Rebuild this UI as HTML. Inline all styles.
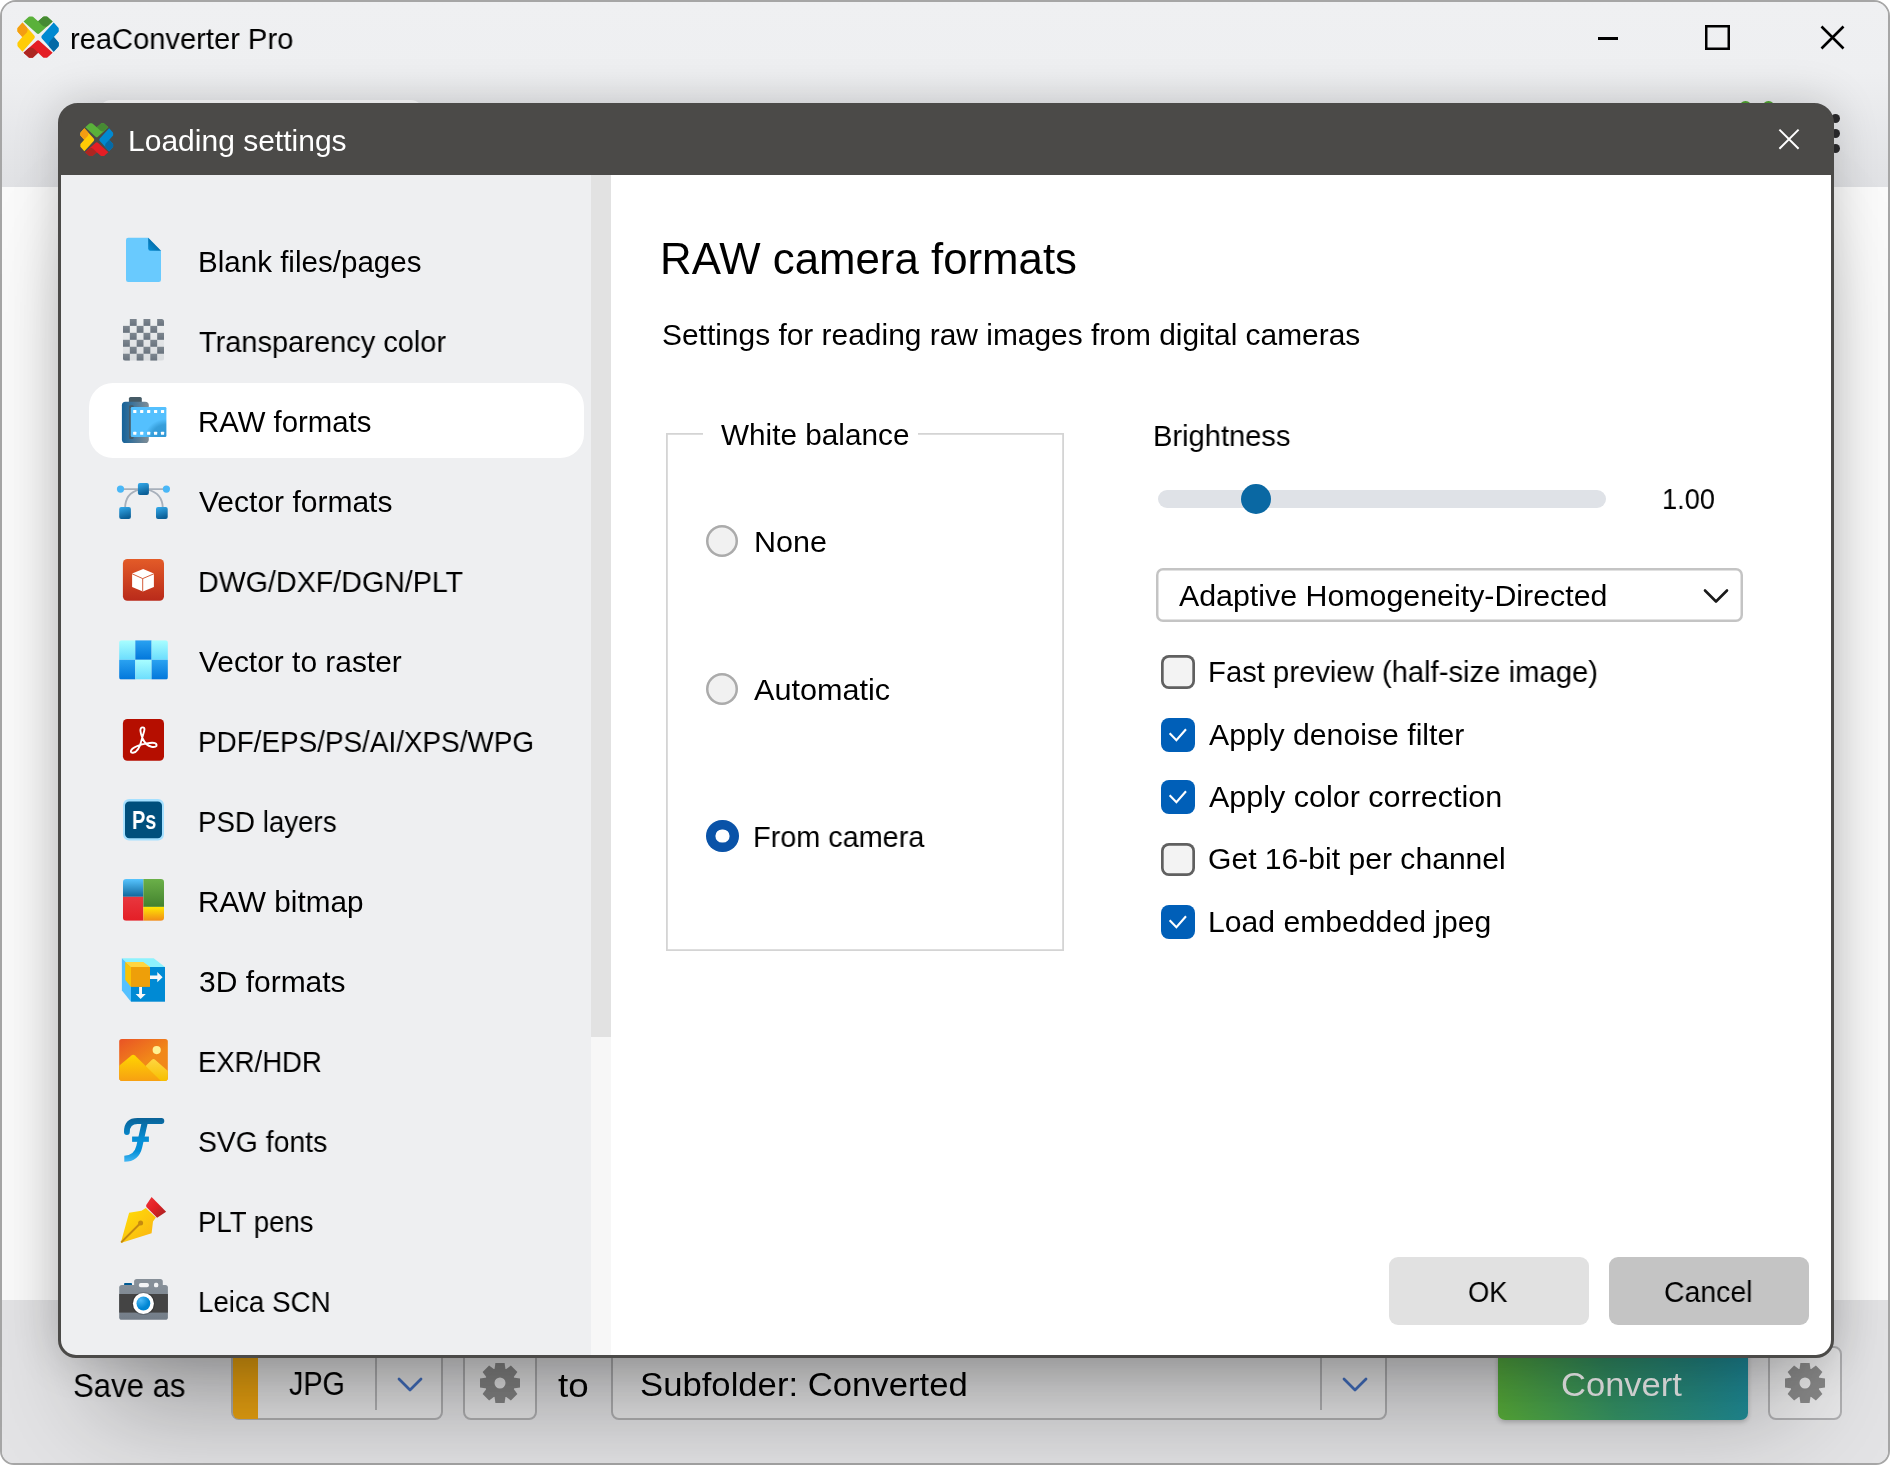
<!DOCTYPE html>
<html><head><meta charset="utf-8"><title>reaConverter Pro</title>
<style>
html,body{margin:0;padding:0;background:#fff;}
body{width:1890px;height:1465px;position:relative;overflow:hidden;font-family:"Liberation Sans",sans-serif;}
.a{position:absolute;}
.t{will-change:transform;position:absolute;white-space:nowrap;line-height:1;transform-origin:0 0;font-family:"Liberation Sans",sans-serif;}
#win{position:absolute;left:0;top:0;width:1886px;height:1461px;border:2px solid #a6a6a6;border-radius:16px 16px 14px 14px;overflow:hidden;background:#f6f6f6;}
#top{position:absolute;left:0;top:0;width:1886px;height:185px;background:linear-gradient(#eff0f2 0,#eeeff1 70px,#e0e1e4 185px);}
#mid{position:absolute;left:0;top:185px;width:1886px;height:1113px;background:#fafafa;}
#bot{position:absolute;left:0;top:1298px;width:1886px;height:165px;background:#e3e3e5;}
#dlg{position:absolute;left:58px;top:103px;width:1770px;height:1249px;border:3px solid #4b4a48;border-radius:20px 20px 18px 18px;background:#4b4a48;box-shadow:0 0 46px rgba(0,0,0,.19),0 90px 100px -40px rgba(0,0,0,.30);overflow:hidden;}
#dtitle{position:absolute;left:0;top:0;width:1770px;height:69px;background:#4b4a48;}
#side{position:absolute;left:0;top:69px;width:530px;height:1180px;background:#eeeff1;}
#sbar{position:absolute;left:530px;top:69px;width:20px;height:1180px;background:#f7f7f7;}
#sthumb{position:absolute;left:0;top:0;width:20px;height:862px;background:#e2e2e2;}
#main{position:absolute;left:550px;top:69px;width:1220px;height:1180px;background:#fff;}
#sel{position:absolute;left:28px;top:208px;width:495px;height:75px;border-radius:24px;background:#fff;}
.btn{position:absolute;top:1257.3px;width:200px;height:67.4px;border-radius:9px;}
.rad{position:absolute;width:32.2px;height:32.2px;box-shadow:inset 0 0 0 2.5px #ababab;border-radius:50%;background:#f1f1f1;}
.cb{position:absolute;left:1161px;width:30px;height:30px;border-radius:8px;}
.cb.off{box-shadow:inset 0 0 0 2.7px #606060;background:#f3f3f3;width:33.8px;height:33.6px;}
.cb.on{background:#005fb8;width:34px;height:34px;}
.combo{position:absolute;top:1344px;height:70px;border:2px solid #b0b0b2;border-radius:8px;background:#e9e9ea;}

</style></head><body>
<div id="win">
 <div id="top"></div><div id="mid"></div><div id="bot"></div>
 <!--WINICONS-->
<!--TABPEEK--><div class="a" style="left:97px;top:97.5px;width:324px;height:30px;border-radius:12px 12px 0 0;background:#fcfcfd;"></div>
<!-- window controls -->
<div class="a" style="left:1596px;top:35px;width:19.5px;height:2.5px;background:#000;"></div>
<div class="a" style="left:1702.6px;top:23px;width:25.4px;height:24.6px;box-shadow:inset 0 0 0 2.5px #000;"></div>
<svg class="a" style="left:1815px;top:20.3px" width="32" height="32" viewBox="0 0 32 32"><path d="M4.5 4.5 L26.5 26.5 M26.5 4.5 L4.5 26.5" stroke="#000" stroke-width="2.6"/></svg>
<!-- green dots and 3-dot menu -->
<div class="a" style="left:1737px;top:99px;width:13px;height:13px;border-radius:50%;background:#4fa530;"></div>
<div class="a" style="left:1760px;top:99px;width:13px;height:13px;border-radius:50%;background:#4fa530;"></div>
<div class="a" style="left:1829px;top:112px;width:9px;height:9px;border-radius:50%;background:#2b2b2d;"></div>
<div class="a" style="left:1829px;top:126.5px;width:9px;height:9px;border-radius:50%;background:#2b2b2d;"></div>
<div class="a" style="left:1829px;top:141.5px;width:9px;height:9px;border-radius:50%;background:#2b2b2d;"></div>

<!--LOGO-->
<svg class="a" style="left:14.8px;top:14.2px" width="42.2" height="42.2" viewBox="0 0 100 100"><g transform="rotate(0 50 50)"><path d="M15.5 13 L28 1.8 Q29 1 30.5 1 H35.5 Q37 1 38 1.9 L50 12.6 L62 1.9 Q63 1 64.5 1 H69.5 Q71 1 72 1.8 L84.5 13 L53.5 41 Q50 44 46.5 41Z" fill="#5ab13a"/><path d="M50 12.6 L62 1.9 Q63 1 64.5 1 H69.5 Q71 1 72 1.8 L84.5 13 L73 23.5 C68 27 62 25 58 20.5Z" fill="#468a33"/></g><g transform="rotate(90 50 50)"><path d="M15.5 13 L28 1.8 Q29 1 30.5 1 H35.5 Q37 1 38 1.9 L50 12.6 L62 1.9 Q63 1 64.5 1 H69.5 Q71 1 72 1.8 L84.5 13 L53.5 41 Q50 44 46.5 41Z" fill="#0089d1"/><path d="M50 12.6 L62 1.9 Q63 1 64.5 1 H69.5 Q71 1 72 1.8 L84.5 13 L73 23.5 C68 27 62 25 58 20.5Z" fill="#056aa6"/></g><g transform="rotate(180 50 50)"><path d="M15.5 13 L28 1.8 Q29 1 30.5 1 H35.5 Q37 1 38 1.9 L50 12.6 L62 1.9 Q63 1 64.5 1 H69.5 Q71 1 72 1.8 L84.5 13 L53.5 41 Q50 44 46.5 41Z" fill="#e41e25"/><path d="M50 12.6 L62 1.9 Q63 1 64.5 1 H69.5 Q71 1 72 1.8 L84.5 13 L73 23.5 C68 27 62 25 58 20.5Z" fill="#ad2621"/></g><g transform="rotate(270 50 50)"><path d="M15.5 13 L28 1.8 Q29 1 30.5 1 H35.5 Q37 1 38 1.9 L50 12.6 L62 1.9 Q63 1 64.5 1 H69.5 Q71 1 72 1.8 L84.5 13 L53.5 41 Q50 44 46.5 41Z" fill="#ffcc05"/><path d="M50 12.6 L62 1.9 Q63 1 64.5 1 H69.5 Q71 1 72 1.8 L84.5 13 L73 23.5 C68 27 62 25 58 20.5Z" fill="#f49d12"/></g></svg>

 <!-- bottom bar controls (coords relative to #win inner = page -2) -->
<div class="combo" style="left:229px;width:208px;"></div>
<div class="a" style="left:231px;top:1347px;width:25px;height:70px;border-radius:6px 0 0 6px;background:#eda511;"></div>
<div class="a" style="left:373px;top:1352px;width:2px;height:56px;background:#b4b4b6;"></div>
<svg class="a" style="left:392px;top:1371px" width="32" height="24" viewBox="0 0 32 24"><path d="M5 6 L16 17 L27 6" fill="none" stroke="#4472c4" stroke-width="2.8" stroke-linecap="round" stroke-linejoin="round"/></svg>
<div class="combo" style="left:461px;width:70px;"></div>
<div class="combo" style="left:609px;width:772px;"></div>
<div class="a" style="left:1318px;top:1352px;width:2px;height:56px;background:#b4b4b6;"></div>
<svg class="a" style="left:1337px;top:1371px" width="32" height="24" viewBox="0 0 32 24"><path d="M5 6 L16 17 L27 6" fill="none" stroke="#4472c4" stroke-width="2.8" stroke-linecap="round" stroke-linejoin="round"/></svg>
<div class="a" style="left:1495.5px;top:1345px;width:250px;height:73px;border-radius:7px;background:linear-gradient(75deg,#5cb43a 0%,#36986a 45%,#1d8da0 100%);box-shadow:0 2px 5px rgba(0,0,0,.22);"></div>
<div class="combo" style="left:1766px;width:70px;"></div>
<!--GEARS-->
<svg class="a" style="left:474px;top:1356.5px" width="48" height="48" viewBox="-24 -24 48 48"><g fill="#888888"><path fill-rule="evenodd" d="M0 -15 A15 15 0 1 1 0 15 A15 15 0 1 1 0 -15Z M0 -5.5 A5.5 5.5 0 1 0 0 5.5 A5.5 5.5 0 1 0 0 -5.5Z"/><path transform="rotate(0)" d="M-4.6 -20 H4.6 L5.6 -13 H-5.6Z"/><path transform="rotate(45)" d="M-4.6 -20 H4.6 L5.6 -13 H-5.6Z"/><path transform="rotate(90)" d="M-4.6 -20 H4.6 L5.6 -13 H-5.6Z"/><path transform="rotate(135)" d="M-4.6 -20 H4.6 L5.6 -13 H-5.6Z"/><path transform="rotate(180)" d="M-4.6 -20 H4.6 L5.6 -13 H-5.6Z"/><path transform="rotate(225)" d="M-4.6 -20 H4.6 L5.6 -13 H-5.6Z"/><path transform="rotate(270)" d="M-4.6 -20 H4.6 L5.6 -13 H-5.6Z"/><path transform="rotate(315)" d="M-4.6 -20 H4.6 L5.6 -13 H-5.6Z"/></g></svg>
<svg class="a" style="left:1778.8px;top:1357px" width="48" height="48" viewBox="-24 -24 48 48"><g fill="#8a8a8a"><path fill-rule="evenodd" d="M0 -15 A15 15 0 1 1 0 15 A15 15 0 1 1 0 -15Z M0 -5.5 A5.5 5.5 0 1 0 0 5.5 A5.5 5.5 0 1 0 0 -5.5Z"/><path transform="rotate(0)" d="M-4.6 -20 H4.6 L5.6 -13 H-5.6Z"/><path transform="rotate(45)" d="M-4.6 -20 H4.6 L5.6 -13 H-5.6Z"/><path transform="rotate(90)" d="M-4.6 -20 H4.6 L5.6 -13 H-5.6Z"/><path transform="rotate(135)" d="M-4.6 -20 H4.6 L5.6 -13 H-5.6Z"/><path transform="rotate(180)" d="M-4.6 -20 H4.6 L5.6 -13 H-5.6Z"/><path transform="rotate(225)" d="M-4.6 -20 H4.6 L5.6 -13 H-5.6Z"/><path transform="rotate(270)" d="M-4.6 -20 H4.6 L5.6 -13 H-5.6Z"/><path transform="rotate(315)" d="M-4.6 -20 H4.6 L5.6 -13 H-5.6Z"/></g></svg>

</div>
<div id="dlg">
 <div id="dtitle"></div>
 <div id="side"><div id="sel"></div></div>
 <div id="sbar"><div id="sthumb"></div></div>
 <div id="main"></div>
</div>
<svg class="a" style="left:0;top:0;pointer-events:none" width="1890" height="1465" viewBox="0 0 1890 1465">
<defs>
 <linearGradient id="gFold" x1="0" y1="1" x2="1" y2="0"><stop offset="0" stop-color="#0690d8"/><stop offset="1" stop-color="#065283"/></linearGradient>
 <linearGradient id="gChkD" x1="0" y1="0" x2="0" y2="1"><stop offset="0" stop-color="#7d868f"/><stop offset="1" stop-color="#69737e"/></linearGradient>
 <linearGradient id="gChkL" x1="0" y1="0" x2="0" y2="1"><stop offset="0" stop-color="#eef0f1"/><stop offset="1" stop-color="#d9dcdf"/></linearGradient>
 <linearGradient id="gCan" x1="0" y1="0" x2="1" y2="0"><stop offset="0" stop-color="#14629a"/><stop offset="1" stop-color="#808d96"/></linearGradient>
 <radialGradient id="gFilm" cx="1" cy="1" r="0.75"><stop offset="0" stop-color="#2f97d6"/><stop offset="0.55" stop-color="#379fdb"/><stop offset="0.8" stop-color="#54c0fe"/><stop offset="1" stop-color="#54c0fe"/></radialGradient>
 <linearGradient id="gSq" x1="0" y1="0" x2="0.3" y2="1"><stop offset="0" stop-color="#35abec"/><stop offset="1" stop-color="#0b5f97"/></linearGradient>
 <linearGradient id="gDwg" x1="0" y1="0" x2="0" y2="1"><stop offset="0" stop-color="#e35b28"/><stop offset="1" stop-color="#b92a1a"/></linearGradient>
 <linearGradient id="gVrL" x1="0" y1="0" x2="0" y2="1"><stop offset="0" stop-color="#a8feff"/><stop offset="1" stop-color="#6cddfd"/></linearGradient>
 <linearGradient id="gVrD" x1="0" y1="0" x2="0" y2="1"><stop offset="0" stop-color="#2aa2f1"/><stop offset="1" stop-color="#0277db"/></linearGradient>
 <linearGradient id="gRbB" x1="0" y1="0" x2="0" y2="1"><stop offset="0" stop-color="#57c5ff"/><stop offset="1" stop-color="#10679c"/></linearGradient>
 <linearGradient id="gRbR" x1="0" y1="0" x2="0" y2="1"><stop offset="0" stop-color="#e8373e"/><stop offset="1" stop-color="#e41e26"/></linearGradient>
 <linearGradient id="gRbG" x1="0" y1="0" x2="0" y2="1"><stop offset="0" stop-color="#6bb049"/><stop offset="1" stop-color="#43822e"/></linearGradient>
 <linearGradient id="gRbY" x1="0" y1="0" x2="0" y2="1"><stop offset="0" stop-color="#ffe802"/><stop offset="1" stop-color="#f28a18"/></linearGradient>
 <linearGradient id="gHdr" x1="0" y1="0" x2="0.45" y2="0.6"><stop offset="0" stop-color="#e95325"/><stop offset="1" stop-color="#f18819"/></linearGradient>
 <linearGradient id="gMt1" x1="0" y1="0" x2="0" y2="1"><stop offset="0" stop-color="#ffd500"/><stop offset="1" stop-color="#f7a012"/></linearGradient>
 <linearGradient id="gMt2" x1="0" y1="0" x2="0" y2="1"><stop offset="0" stop-color="#ffd640"/><stop offset="1" stop-color="#f6bf00"/></linearGradient>
 <linearGradient id="gF" gradientUnits="userSpaceOnUse" x1="0" y1="1118" x2="0" y2="1162"><stop offset="0" stop-color="#0a6297"/><stop offset="0.5" stop-color="#058fd7"/><stop offset="0.75" stop-color="#058fd7"/><stop offset="1" stop-color="#45b8f5"/></linearGradient>
 <linearGradient id="gNib" x1="0" y1="0" x2="1" y2="1"><stop offset="0" stop-color="#ffe106"/><stop offset="1" stop-color="#fab015"/></linearGradient>
 <linearGradient id="gPenR" x1="0" y1="0" x2="1" y2="1"><stop offset="0" stop-color="#ec363b"/><stop offset="0.45" stop-color="#e41f25"/><stop offset="1" stop-color="#9e2322"/></linearGradient>
 <radialGradient id="gLens" cx="0.3" cy="0.25" r="0.6"><stop offset="0" stop-color="#4bb9f7"/><stop offset="1" stop-color="#0086d3"/></radialGradient>
 <linearGradient id="gCam" x1="0" y1="0" x2="0" y2="1"><stop offset="0" stop-color="#868f98"/><stop offset="1" stop-color="#737d88"/></linearGradient>
</defs>
<!-- 1 blank file -->
<path d="M128.2 237.8 H148.2 L161 250.8 V279.8 Q161 282 158.8 282 H128.2 Q126 282 126 279.8 V240 Q126 237.8 128.2 237.8Z" fill="#69cafe"/>
<path d="M148.2 237.8 L161 250.8 H150.4 Q148.2 250.8 148.2 248.6Z" fill="url(#gFold)"/>
<!-- 2 checker -->
<g>
<clipPath id="cpChk"><rect x="123" y="318.9" width="41" height="41.8" rx="2.5"/></clipPath>
<g clip-path="url(#cpChk)">
<rect x="123" y="318.9" width="41" height="41.8" fill="url(#gChkL)"/>
<g fill="url(#gChkD)">
<rect x="129.83" y="318.90" width="6.83" height="6.97"/>
<rect x="143.50" y="318.90" width="6.83" height="6.97"/>
<rect x="157.17" y="318.90" width="6.83" height="6.97"/>
<rect x="123.00" y="325.87" width="6.83" height="6.97"/>
<rect x="136.67" y="325.87" width="6.83" height="6.97"/>
<rect x="150.33" y="325.87" width="6.83" height="6.97"/>
<rect x="129.83" y="332.83" width="6.83" height="6.97"/>
<rect x="143.50" y="332.83" width="6.83" height="6.97"/>
<rect x="157.17" y="332.83" width="6.83" height="6.97"/>
<rect x="123.00" y="339.80" width="6.83" height="6.97"/>
<rect x="136.67" y="339.80" width="6.83" height="6.97"/>
<rect x="150.33" y="339.80" width="6.83" height="6.97"/>
<rect x="129.83" y="346.77" width="6.83" height="6.97"/>
<rect x="143.50" y="346.77" width="6.83" height="6.97"/>
<rect x="157.17" y="346.77" width="6.83" height="6.97"/>
<rect x="123.00" y="353.73" width="6.83" height="6.97"/>
<rect x="136.67" y="353.73" width="6.83" height="6.97"/>
<rect x="150.33" y="353.73" width="6.83" height="6.97"/>
</g></g></g>
<!-- 3 film -->
<rect x="128.9" y="397" width="12.9" height="8" rx="1.6" fill="#465b66"/>
<rect x="121.9" y="401.8" width="26.9" height="41.2" rx="3.6" fill="url(#gCan)"/>
<rect x="129.1" y="405.3" width="4.5" height="33.7" rx="1.3" fill="#465a66"/>
<rect x="130.8" y="407" width="35.6" height="29.9" rx="1.2" fill="url(#gFilm)"/>
<g fill="#fff">
<rect x="133.20" y="410.1" width="3.2" height="2.8" rx="0.5"/>
<rect x="133.20" y="431.8" width="3.2" height="2.9" rx="0.5"/>
<rect x="140.13" y="410.1" width="3.2" height="2.8" rx="0.5"/>
<rect x="140.13" y="431.8" width="3.2" height="2.9" rx="0.5"/>
<rect x="147.06" y="410.1" width="3.2" height="2.8" rx="0.5"/>
<rect x="147.06" y="431.8" width="3.2" height="2.9" rx="0.5"/>
<rect x="153.99" y="410.1" width="3.2" height="2.8" rx="0.5"/>
<rect x="153.99" y="431.8" width="3.2" height="2.9" rx="0.5"/>
<rect x="160.92" y="410.1" width="3.2" height="2.8" rx="0.5"/>
<rect x="160.92" y="431.8" width="3.2" height="2.9" rx="0.5"/>
</g>
<!-- 4 vector -->
<path d="M120.5 489.1 H166.4" stroke="#a7b0bb" stroke-width="1.9" fill="none"/>
<path d="M139 489.6 C130 492 125.2 499 125.1 508" stroke="#a7b0bb" stroke-width="1.9" fill="none"/>
<path d="M147.8 489.6 C157.5 492 162.6 499 162.8 508" stroke="#a7b0bb" stroke-width="1.9" fill="none"/>
<circle cx="120.5" cy="489.1" r="3.6" fill="#49b7f7"/><circle cx="166.4" cy="489.1" r="3.6" fill="#49b7f7"/>
<rect x="137.9" y="483" width="11" height="12" rx="2" fill="url(#gSq)"/>
<rect x="119.2" y="507.1" width="11.7" height="11.9" rx="2" fill="url(#gSq)"/>
<rect x="156" y="507.1" width="11.7" height="11.9" rx="2" fill="url(#gSq)"/>
<!-- 5 dwg -->
<rect x="122.9" y="559" width="41.1" height="41.7" rx="4.5" fill="url(#gDwg)"/>
<path d="M143.2 568.9 L153.9 573.6 V587.1 L142.9 591.4 L132.1 587.1 V573.6Z" fill="#fff"/>
<path d="M132.1 573.8 L142.7 578.6 L153.9 573.8 M142.7 578.6 V591.4" stroke="#d04a24" stroke-width="0.9" fill="none"/>
<!-- 6 vector to raster -->
<clipPath id="cpVr"><rect x="119.1" y="640.2" width="48.8" height="39.4" rx="2.6"/></clipPath>
<g clip-path="url(#cpVr)">
<rect x="119.1" y="640.2" width="16.2" height="19.6" fill="url(#gVrL)"/><rect x="135.3" y="640.2" width="16.3" height="19.6" fill="url(#gVrD)"/><rect x="151.6" y="640.2" width="16.3" height="19.6" fill="url(#gVrL)"/>
<rect x="119.1" y="659.8" width="16.2" height="19.8" fill="url(#gVrD)"/><rect x="135.3" y="659.8" width="16.3" height="19.8" fill="url(#gVrL)"/><rect x="151.6" y="659.8" width="16.3" height="19.8" fill="url(#gVrD)"/>
</g>
<!-- 7 pdf -->
<rect x="122.9" y="719" width="41.1" height="41.7" rx="4.5" fill="#b50e00"/>
<g fill="none" stroke="#fff" stroke-width="1.9" stroke-linecap="round" stroke-linejoin="round">
<path d="M133 752.7 C137.8 752.6 140.2 746 141.9 739 C143.6 732 146.2 727.6 142.8 727.4 C139.2 727.2 140.2 733 142.6 738.5 C144.6 743 148 746 151.5 746.8 C155 747.5 156.9 746.4 156.6 744.9 C156.1 742.7 152 742.4 147 743.4 C142 744.3 135.6 745.8 132.4 748.8 C129.9 751.2 130.6 752.9 133 752.7Z"/>
</g>
<!-- 8 ps -->
<rect x="123.1" y="799.1" width="40.9" height="41.4" rx="6" fill="#a5e0ff"/>
<rect x="125" y="801.5" width="37" height="36.8" rx="4.2" fill="#004f7c"/>
<!-- 9 raw bitmap -->
<clipPath id="cpRb"><rect x="123" y="878.9" width="41" height="41.8" rx="3.2"/></clipPath>
<g clip-path="url(#cpRb)">
<rect x="123" y="878.9" width="20.4" height="17.9" fill="url(#gRbB)"/>
<rect x="123" y="896.8" width="20.4" height="24" fill="url(#gRbR)"/>
<rect x="143.4" y="878.9" width="20.6" height="28" fill="url(#gRbG)"/>
<rect x="143.4" y="906.9" width="20.6" height="14" fill="url(#gRbY)"/>
</g>
<!-- 10 3d -->
<path d="M121.9 958.2 H153.7 L165 967 H131Z" fill="#8ef2fd"/>
<path d="M121.9 958.2 L131 967 V1001.7 L121.9 990.4Z" fill="#55c1ff"/>
<rect x="131" y="967" width="34" height="34.7" fill="#008ad4"/>
<path d="M125.2 962 H143.4 L150 967 H131Z" fill="#ffd540"/>
<path d="M125.2 962 L131 967 V986.9 L125.2 979.7Z" fill="#f9c305"/>
<rect x="131" y="967" width="19" height="19.9" fill="#ee9f09"/>
<path d="M150 975.6 H157.3 V972 L162.6 977.2 L157.3 982.3 V979 H150Z" fill="#f8f8f8"/>
<path d="M139.1 986.9 H142 V994 H145.8 L140.6 999 L135.6 994 H139.1Z" fill="#f8f8f8"/>
<!-- 11 exr/hdr -->
<clipPath id="cpHdr"><rect x="119.1" y="1038.9" width="48.8" height="42" rx="2.8"/></clipPath>
<g clip-path="url(#cpHdr)">
<rect x="119.1" y="1038.9" width="48.8" height="42" fill="url(#gHdr)"/>
<path d="M145.8 1065.7 L151.9 1059.8 Q153.5 1058.3 155.1 1059.8 L167.9 1070.9 V1081 H150Z" fill="url(#gMt2)"/>
<path d="M119.1 1065.7 L131.4 1055.4 Q133.2 1053.9 135 1055.5 L161 1081 H119.1Z" fill="url(#gMt1)"/>
<circle cx="156.7" cy="1050.1" r="4.1" fill="#fff192"/>
</g>
<!-- 12 F -->
<g fill="none" stroke="url(#gF)" stroke-linejoin="round">
<path d="M161.4 1121 H137.5 C130 1121 126.9 1125 126.9 1132" stroke-width="5.8" stroke-linecap="round"/>
<path d="M145 1121.5 L139.3 1146.5 C137.5 1154.5 132.5 1158.7 124.3 1158.7" stroke-width="6" />
<path d="M132.1 1139.2 H148.9" stroke-width="5.3"/>
</g>
<!-- 13 pen -->
<path d="M120.75 1242.9 L129.1 1212.8 L141.5 1210.8 L145.8 1208 L155.9 1217.5 L153 1221.4 L151.6 1233.3Z" fill="url(#gNib)"/>
<path d="M151.6 1197 L166.1 1211.8 L157.1 1217.8 L146.4 1207 Q145.8 1205.8 146.4 1204.8Z" fill="url(#gPenR)"/>
<path d="M121.2 1242.4 L140.6 1223" stroke="#c58910" stroke-width="2" fill="none"/>
<circle cx="140.6" cy="1223" r="2.5" fill="#c58910"/>
<!-- 14 camera -->
<rect x="124.1" y="1283" width="7.9" height="4" rx="0.8" fill="#005a94"/>
<rect x="134.1" y="1278.9" width="28.7" height="10" rx="2.6" fill="#868f98"/>
<rect x="119.2" y="1284.9" width="48.7" height="34.9" rx="2.6" fill="url(#gCam)"/>
<rect x="119.2" y="1294" width="48.7" height="18.6" fill="#444"/>
<rect x="138.9" y="1283" width="10" height="4.3" rx="1.8" fill="#f3f4f5"/>
<rect x="154" y="1282.8" width="4.3" height="4.5" rx="1.6" fill="#f3f4f5"/>
<circle cx="143.4" cy="1303.5" r="11.6" fill="#000" opacity="0.18"/>
<circle cx="143.4" cy="1303.5" r="10.5" fill="#fff"/>
<circle cx="143.4" cy="1303.5" r="6.9" fill="url(#gLens)"/>
</svg>

<!-- group box -->
<div class="a" style="left:666px;top:432.8px;width:398.4px;height:518.6px;box-shadow:inset 0 0 0 1.8px #d4d4d4;"></div>
<div class="a" style="left:703px;top:430px;width:215px;height:8px;background:#fff;"></div>
<!-- radios -->
<div class="rad" style="left:706.1px;top:525px;"></div>
<div class="rad" style="left:706.1px;top:672.8px;"></div>
<div class="a" style="left:706.2px;top:820px;width:32.4px;height:32.4px;box-shadow:inset 0 0 0 9.4px #0a53a8;border-radius:50%;background:#fff;"></div>
<!-- slider -->
<div class="a" style="left:1158px;top:489.7px;width:448px;height:18px;border-radius:9px;background:#dfe2e7;"></div>
<div class="a" style="left:1240.8px;top:483.7px;width:30.4px;height:30.4px;border-radius:50%;background:#0a68a3;"></div>
<!-- dropdown -->
<div class="a" style="left:1156.3px;top:568.4px;width:586.8px;height:53.2px;box-shadow:inset 0 0 0 2.5px #c4c4c4;border-radius:7px;background:#fff;"></div>
<svg class="a" style="left:1700px;top:584px" width="32" height="24" viewBox="0 0 32 24"><path d="M5 6.5 L16 17.5 L27 6.5" fill="none" stroke="#1a1a1a" stroke-width="2.6" stroke-linecap="round" stroke-linejoin="round"/></svg>
<!-- checkboxes -->
<div class="cb off" style="top:655.2px;"></div>
<div class="cb on" style="top:717.8px;"></div>
<div class="cb on" style="top:780.2px;"></div>
<div class="cb off" style="top:842.8px;"></div>
<div class="cb on" style="top:905.1px;"></div>
<svg class="a" style="left:1161px;top:717.8px" width="34" height="34" viewBox="0 0 34 34"><path d="M8.65 15.3 L15.4 22.3 L25 11.25" fill="none" stroke="#fff" stroke-width="2.1"/></svg>
<svg class="a" style="left:1161px;top:780.2px" width="34" height="34" viewBox="0 0 34 34"><path d="M8.65 15.3 L15.4 22.3 L25 11.25" fill="none" stroke="#fff" stroke-width="2.1"/></svg>
<svg class="a" style="left:1161px;top:905.1px" width="34" height="34" viewBox="0 0 34 34"><path d="M8.65 15.3 L15.4 22.3 L25 11.25" fill="none" stroke="#fff" stroke-width="2.1"/></svg>
<!-- buttons -->
<div class="btn" style="left:1388.5px;background:#e1e1e1;"></div>
<div class="btn" style="left:1608.5px;background:#c4c4c4;"></div>
<!-- dialog close -->
<svg class="a" style="left:1774px;top:124px" width="30" height="30" viewBox="0 0 30 30"><path d="M5.4 5.6 L24.6 24.8 M24.6 5.6 L5.4 24.8" stroke="#fff" stroke-width="2"/></svg>

<!--DLOGO-->
<svg class="a" style="left:80px;top:122.5px" width="33.5" height="33.5" viewBox="0 0 100 100"><g transform="rotate(0 50 50)"><path d="M15.5 13 L28 1.8 Q29 1 30.5 1 H35.5 Q37 1 38 1.9 L50 12.6 L62 1.9 Q63 1 64.5 1 H69.5 Q71 1 72 1.8 L84.5 13 L53.5 41 Q50 44 46.5 41Z" fill="#5ab13a"/><path d="M50 12.6 L62 1.9 Q63 1 64.5 1 H69.5 Q71 1 72 1.8 L84.5 13 L73 23.5 C68 27 62 25 58 20.5Z" fill="#468a33"/></g><g transform="rotate(90 50 50)"><path d="M15.5 13 L28 1.8 Q29 1 30.5 1 H35.5 Q37 1 38 1.9 L50 12.6 L62 1.9 Q63 1 64.5 1 H69.5 Q71 1 72 1.8 L84.5 13 L53.5 41 Q50 44 46.5 41Z" fill="#0089d1"/><path d="M50 12.6 L62 1.9 Q63 1 64.5 1 H69.5 Q71 1 72 1.8 L84.5 13 L73 23.5 C68 27 62 25 58 20.5Z" fill="#056aa6"/></g><g transform="rotate(180 50 50)"><path d="M15.5 13 L28 1.8 Q29 1 30.5 1 H35.5 Q37 1 38 1.9 L50 12.6 L62 1.9 Q63 1 64.5 1 H69.5 Q71 1 72 1.8 L84.5 13 L53.5 41 Q50 44 46.5 41Z" fill="#e41e25"/><path d="M50 12.6 L62 1.9 Q63 1 64.5 1 H69.5 Q71 1 72 1.8 L84.5 13 L73 23.5 C68 27 62 25 58 20.5Z" fill="#ad2621"/></g><g transform="rotate(270 50 50)"><path d="M15.5 13 L28 1.8 Q29 1 30.5 1 H35.5 Q37 1 38 1.9 L50 12.6 L62 1.9 Q63 1 64.5 1 H69.5 Q71 1 72 1.8 L84.5 13 L53.5 41 Q50 44 46.5 41Z" fill="#ffcc05"/><path d="M50 12.6 L62 1.9 Q63 1 64.5 1 H69.5 Q71 1 72 1.8 L84.5 13 L73 23.5 C68 27 62 25 58 20.5Z" fill="#f49d12"/></g></svg>

<span class="t" id="t0" style="left:70.41px;top:23.80px;font-size:29.3px;color:#000;transform:scaleX(0.9937);">reaConverter Pro</span>
<span class="t" id="t1" style="left:128.45px;top:125.60px;font-size:29.3px;color:#fff;transform:scaleX(1.0245);">Loading settings</span>
<span class="t" id="t2" style="left:197.78px;top:246.90px;font-size:29.3px;color:#000;transform:scaleX(1.0090);">Blank files/pages</span>
<span class="t" id="t3" style="left:198.80px;top:326.90px;font-size:29.3px;color:#000;transform:scaleX(0.9896);">Transparency color</span>
<span class="t" id="t4" style="left:197.80px;top:406.90px;font-size:29.3px;color:#000;transform:scaleX(1.0016);">RAW formats</span>
<span class="t" id="t5" style="left:198.80px;top:486.90px;font-size:29.3px;color:#000;transform:scaleX(1.0243);">Vector formats</span>
<span class="t" id="t6" style="left:197.85px;top:566.90px;font-size:29.3px;color:#000;transform:scaleX(0.9775);">DWG/DXF/DGN/PLT</span>
<span class="t" id="t7" style="left:198.80px;top:646.90px;font-size:29.3px;color:#000;transform:scaleX(1.0206);">Vector to raster</span>
<span class="t" id="t8" style="left:197.90px;top:726.90px;font-size:29.3px;color:#000;transform:scaleX(0.9511);">PDF/EPS/PS/AI/XPS/WPG</span>
<span class="t" id="t9" style="left:197.91px;top:806.90px;font-size:29.3px;color:#000;transform:scaleX(0.9459);">PSD layers</span>
<span class="t" id="t10" style="left:197.77px;top:886.90px;font-size:29.3px;color:#000;transform:scaleX(1.0128);">RAW bitmap</span>
<span class="t" id="t11" style="left:198.78px;top:966.90px;font-size:29.3px;color:#000;transform:scaleX(1.0232);">3D formats</span>
<span class="t" id="t12" style="left:197.92px;top:1046.90px;font-size:29.3px;color:#000;transform:scaleX(0.9387);">EXR/HDR</span>
<span class="t" id="t13" style="left:198.43px;top:1126.90px;font-size:29.3px;color:#000;transform:scaleX(0.9676);">SVG fonts</span>
<span class="t" id="t14" style="left:197.92px;top:1206.90px;font-size:29.3px;color:#000;transform:scaleX(0.9413);">PLT pens</span>
<span class="t" id="t15" style="left:197.91px;top:1286.90px;font-size:29.3px;color:#000;transform:scaleX(0.9465);">Leica SCN</span>
<span class="t" id="t16" style="left:659.90px;top:236.62px;font-size:43.8px;color:#000;transform:scaleX(1.0001);">RAW camera formats</span>
<span class="t" id="t17" style="left:661.88px;top:319.70px;font-size:29.3px;color:#000;transform:scaleX(1.0211);">Settings for reading raw images from digital cameras</span>
<span class="t" id="t18" style="left:721.30px;top:420.40px;font-size:29.3px;color:#000;transform:scaleX(1.0149);">White balance</span>
<span class="t" id="t19" style="left:753.82px;top:527.20px;font-size:29.3px;color:#000;transform:scaleX(1.0413);">None</span>
<span class="t" id="t20" style="left:754.20px;top:675.10px;font-size:29.3px;color:#000;transform:scaleX(1.0446);">Automatic</span>
<span class="t" id="t21" style="left:753.43px;top:821.80px;font-size:29.3px;color:#000;transform:scaleX(0.9833);">From camera</span>
<span class="t" id="t22" style="left:1153.41px;top:420.70px;font-size:29.3px;color:#000;transform:scaleX(0.9936);">Brightness</span>
<span class="t" id="t23" style="left:1662.14px;top:483.60px;font-size:29.3px;color:#000;transform:scaleX(0.9282);">1.00</span>
<span class="t" id="t24" style="left:1179.40px;top:581.10px;font-size:29.3px;color:#000;transform:scaleX(1.0358);">Adaptive Homogeneity-Directed</span>
<span class="t" id="t25" style="left:1208.10px;top:656.80px;font-size:29.3px;color:#000;transform:scaleX(0.9980);">Fast preview (half-size image)</span>
<span class="t" id="t26" style="left:1209.30px;top:719.70px;font-size:29.3px;color:#000;transform:scaleX(1.0316);">Apply denoise filter</span>
<span class="t" id="t27" style="left:1209.30px;top:782.00px;font-size:29.3px;color:#000;transform:scaleX(1.0406);">Apply color correction</span>
<span class="t" id="t28" style="left:1208.27px;top:844.20px;font-size:29.3px;color:#000;transform:scaleX(1.0272);">Get 16-bit per channel</span>
<span class="t" id="t29" style="left:1208.04px;top:907.00px;font-size:29.3px;color:#000;transform:scaleX(1.0290);">Load embedded jpeg</span>
<span class="t" id="t30" style="left:1468.07px;top:1276.70px;font-size:29.3px;color:#000;transform:scaleX(0.9333);">OK</span>
<span class="t" id="t31" style="left:1664.03px;top:1276.70px;font-size:29.3px;color:#000;transform:scaleX(0.9697);">Cancel</span>
<span class="t" id="t32" style="left:73.27px;top:1368.94px;font-size:33.5px;color:#000;transform:scaleX(0.9288);">Save as</span>
<span class="t" id="t33" style="left:288.50px;top:1366.84px;font-size:33.5px;color:#000;transform:scaleX(0.8590);">JPG</span>
<span class="t" id="t34" style="left:558.20px;top:1368.74px;font-size:33.5px;color:#000;transform:scaleX(1.0986);">to</span>
<span class="t" id="t35" style="left:639.96px;top:1367.64px;font-size:33.5px;color:#000;transform:scaleX(1.0352);">Subfolder: Converted</span>
<span class="t" id="t36" style="left:1561.37px;top:1367.64px;font-size:33.5px;color:#cdcdcd;transform:scaleX(1.0308);">Convert</span>
<span class="t" id="t37" style="left:131.55px;top:806.97px;font-size:26.5px;color:#fff;transform:scaleX(0.7498);font-weight:bold;">Ps</span>

</body></html>
